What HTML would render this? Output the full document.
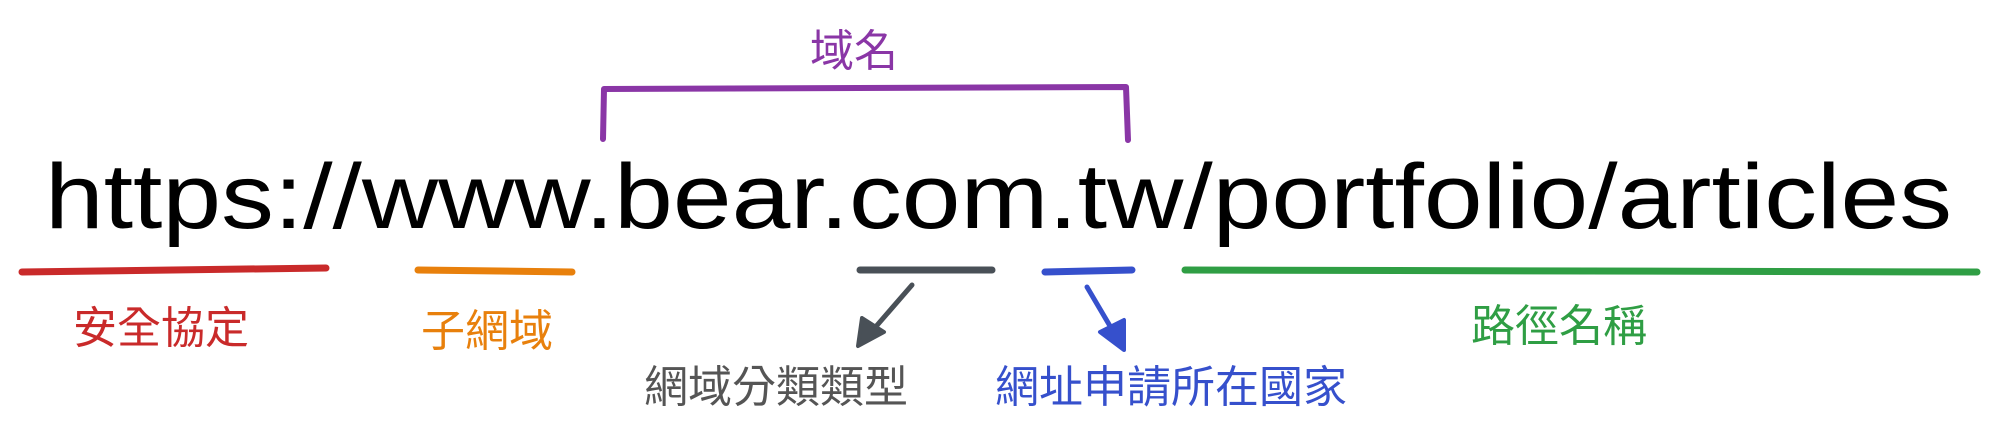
<!DOCTYPE html>
<html><head><meta charset="utf-8"><style>
html,body{margin:0;padding:0;background:#fff;width:2000px;height:439px;overflow:hidden}
svg{display:block}
.l{font-family:"Liberation Sans","Noto Sans CJK TC",sans-serif;font-size:44px}
</style></head><body>
<svg width="2000" height="439" viewBox="0 0 2000 439" xmlns="http://www.w3.org/2000/svg">
<text x="810" y="66" class="l" fill="#8a36a6">域名</text>
<path d="M603 139 L604 89 L1126 87 L1128 140" fill="none" stroke="#8a36a6" stroke-width="6" stroke-linejoin="round" stroke-linecap="round"/>
<text x="45" y="228" font-family="Liberation Sans, sans-serif" font-size="92" textLength="1907" lengthAdjust="spacingAndGlyphs" fill="#000">https://www.bear.com.tw/portfolio/articles</text>
<g stroke-width="7" stroke-linecap="round" fill="none">
<path d="M22 272 L326 268" stroke="#c92a2a"/>
<path d="M418 270 L572 272" stroke="#e8800c"/>
<path d="M860 270 L992 270" stroke="#495057"/>
<path d="M1045 272 L1132 270" stroke="#3650cc"/>
<path d="M1185 270 L1977 272" stroke="#2f9e44"/>
<path d="M912 285 L866 338" stroke="#495057" stroke-width="5"/>
<path d="M1087 287 L1120 343" stroke="#3650cc" stroke-width="5"/>
</g>
<path d="M858 346 L862 318 L884 332 Z" fill="#495057" stroke="#495057" stroke-width="4" stroke-linejoin="round"/>
<path d="M1124 350 L1100 332 L1124 320 Z" fill="#3650cc" stroke="#3650cc" stroke-width="4" stroke-linejoin="round"/>
<text x="73" y="343" class="l" fill="#c92a2a">安全協定</text>
<text x="421" y="346" class="l" fill="#e8800c">子網域</text>
<text x="644" y="402" class="l" fill="#555">網域分類類型</text>
<text x="995" y="402" class="l" fill="#3650cc">網址申請所在國家</text>
<text x="1471" y="341" class="l" fill="#2f9e44">路徑名稱</text>
</svg>
</body></html>
